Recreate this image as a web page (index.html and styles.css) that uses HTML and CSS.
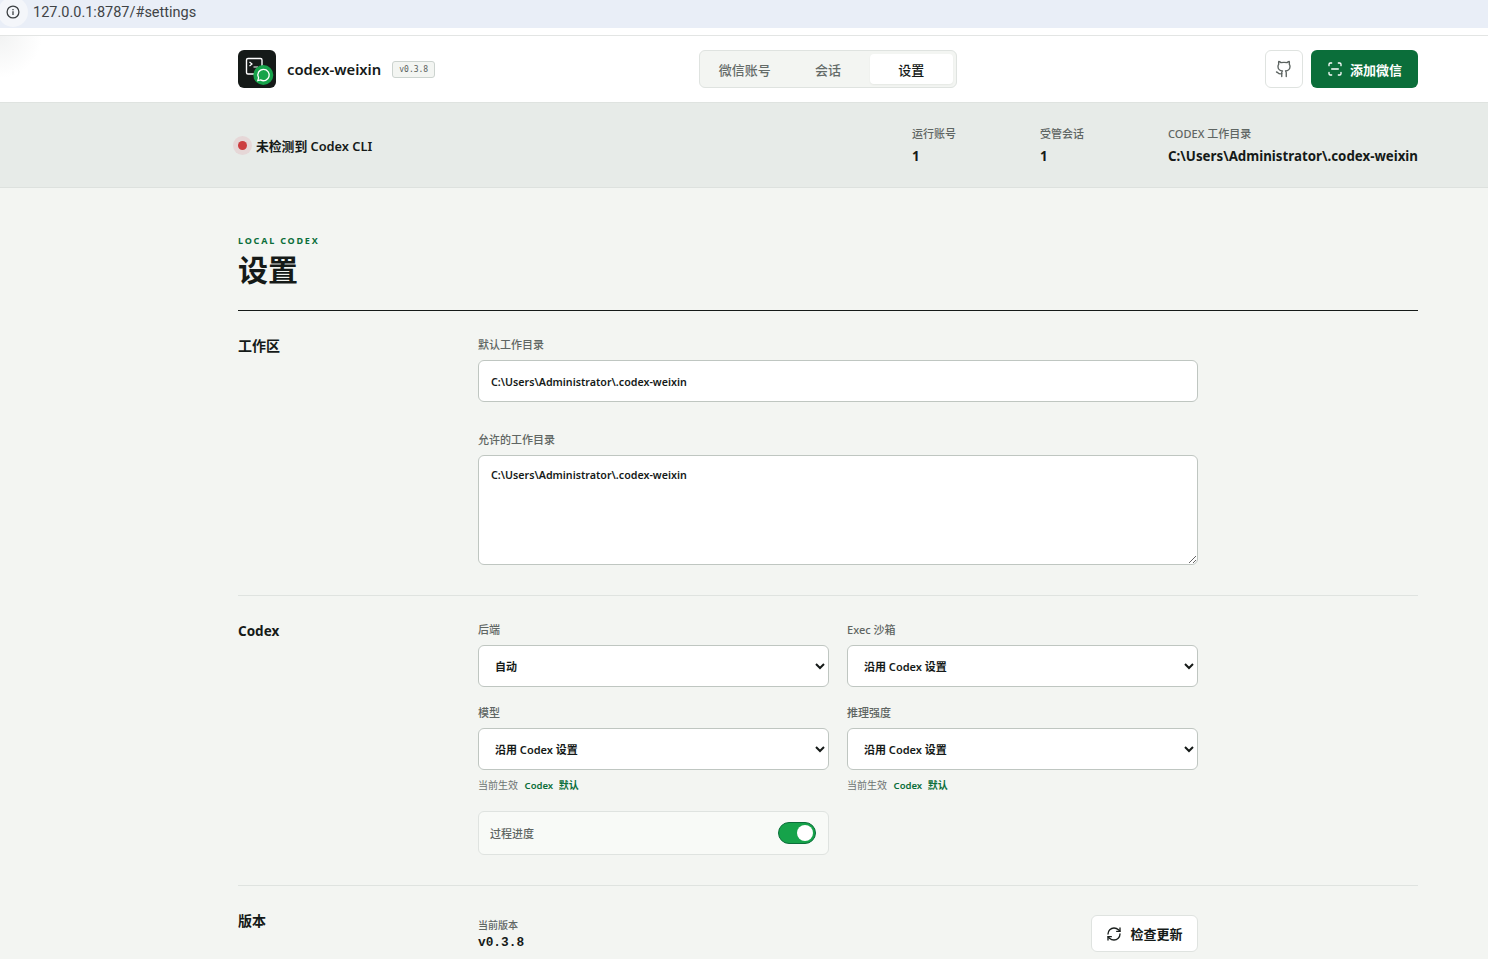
FILE: index.html
```html
<!DOCTYPE html>
<html lang="en">

<head>
  <meta name="viewport" content="width=device-width, initial-scale=1.0" />
  <title>codex-weixin</title>
  <link rel="stylesheet" href="styles.css">
</head>

<body>
  <div class="urlbar">
    <span class="url-icon">
      <svg width="14" height="14" viewBox="0 0 14 14" fill="none" stroke="#3c4043" stroke-width="1.3">
        <circle cx="7" cy="7" r="5.9" />
        <path d="M7 6.2v3.8" />
        <path d="M7 4v1.3" />
      </svg>
    </span>
    <span class="url-text">127.0.0.1:8787/#settings</span>
  </div>

  <header class="topbar">
    <div class="wrap topbar-inner">
      <div class="brand">
        <span class="logo">
          <svg width="38" height="38" viewBox="0 0 38 38" fill="none">
            <rect x="8.5" y="8.5" width="15.5" height="15.5" rx="1.5" stroke="#fff" stroke-width="1.4" />
            <path d="M11.5 12l2.5 2-2.5 2" stroke="#fff" stroke-width="1.2" />
            <path d="M15.5 17h4.5" stroke="#fff" stroke-width="1.2" />
            <circle cx="25.3" cy="25" r="10" fill="#16a34a" />
            <path d="M25.5 19.3a5.7 5.7 0 1 1-2.9 10.6l-2.8.7.8-2.7a5.7 5.7 0 0 1 4.9-8.6z" stroke="#fff" stroke-width="1.3" />
          </svg>
        </span>
        <span class="brand-name">codex-weixin</span>
        <span class="version-tag">v0.3.8</span>
      </div>

      <nav class="tabs">
        <a class="tab">微信账号</a>
        <a class="tab">会话</a>
        <a class="tab active">设置</a>
      </nav>

      <div class="top-actions">
        <button class="icon-btn" type="button">
          <svg width="18" height="18" viewBox="0 0 24 24" fill="none" stroke="#5b625f" stroke-width="1.8" stroke-linecap="round" stroke-linejoin="round">
            <path d="M15 22v-4a4.8 4.8 0 0 0-1-3.5c3 0 6-2 6-5.5.08-1.25-.27-2.48-1-3.5.28-1.15.28-2.35 0-3.5 0 0-1 0-3 1.5-2.64-.5-5.36-.5-8 0C6 2 5 2 5 2c-.3 1.15-.3 2.35 0 3.5A5.403 5.403 0 0 0 4 9c0 3.5 3 5.5 6 5.5-.39.49-.68 1.05-.85 1.65-.17.6-.22 1.23-.15 1.85v4" />
            <path d="M9 18c-4.51 2-5-2-7-2" />
          </svg>
        </button>
        <button class="add-btn" type="button">
          <svg width="16" height="16" viewBox="0 0 24 24" fill="none" stroke="#fff" stroke-width="2" stroke-linecap="round" stroke-linejoin="round">
            <path d="M3 7V5a2 2 0 0 1 2-2h2" />
            <path d="M17 3h2a2 2 0 0 1 2 2v2" />
            <path d="M21 17v2a2 2 0 0 1-2 2h-2" />
            <path d="M7 21H5a2 2 0 0 1-2-2v-2" />
            <path d="M7 12h10" />
          </svg>
          添加微信
        </button>
      </div>
    </div>
  </header>

  <section class="status">
    <div class="wrap status-inner">
      <div class="status-state">
        <span class="dot"></span>
        <span>未检测到 Codex CLI</span>
      </div>
      <div class="stats">
        <div class="stat stat-short">
          <span class="stat-label">运行账号</span>
          <strong>1</strong>
        </div>
        <div class="stat stat-short">
          <span class="stat-label">受管会话</span>
          <strong>1</strong>
        </div>
        <div class="stat">
          <span class="stat-label">CODEX 工作目录</span>
          <strong>C:\Users\Administrator\.codex-weixin</strong>
        </div>
      </div>
    </div>
  </section>

  <main class="wrap">
    <div class="page-head">
      <p class="eyebrow">LOCAL CODEX</p>
      <h1>设置</h1>
    </div>

    <section class="group">
      <h2>工作区</h2>
      <div class="form">
        <label class="field">
          <span class="field-label">默认工作目录</span>
          <input type="text" value="C:\Users\Administrator\.codex-weixin" />
        </label>
        <label class="field field-gap">
          <span class="field-label">允许的工作目录</span>
          <textarea>C:\Users\Administrator\.codex-weixin</textarea>
        </label>
      </div>
    </section>

    <section class="group">
      <h2 class="latin">Codex</h2>
      <div class="form">
        <div class="two-col">
          <label class="field">
            <span class="field-label">后端</span>
            <select><option>自动</option></select>
          </label>
          <label class="field">
            <span class="field-label">Exec 沙箱</span>
            <select><option>沿用 Codex 设置</option></select>
          </label>
          <div class="field">
            <span class="field-label">模型</span>
            <select><option>沿用 Codex 设置</option></select>
            <p class="hint">当前生效 <code>Codex</code> <b>默认</b></p>
          </div>
          <div class="field">
            <span class="field-label">推理强度</span>
            <select><option>沿用 Codex 设置</option></select>
            <p class="hint">当前生效 <code>Codex</code> <b>默认</b></p>
          </div>
          <div class="toggle-card">
            <span>过程进度</span>
            <span class="switch"></span>
          </div>
        </div>
      </div>
    </section>

    <section class="group group-last">
      <h2>版本</h2>
      <div class="form version-row">
        <div class="version-info">
          <span class="version-label">当前版本</span>
          <span class="version-num">v0.3.8</span>
        </div>
        <button class="update-btn" type="button">
          <svg width="16" height="16" viewBox="0 0 24 24" fill="none" stroke="#1a1f1d" stroke-width="2" stroke-linecap="round" stroke-linejoin="round">
            <path d="M3 12a9 9 0 0 1 9-9 9.75 9.75 0 0 1 6.74 2.74L21 8" />
            <path d="M21 3v5h-5" />
            <path d="M21 12a9 9 0 0 1-9 9 9.75 9.75 0 0 1-6.74-2.74L3 16" />
            <path d="M8 16H3v5" />
          </svg>
          检查更新
        </button>
      </div>
    </section>
  </main>
</body>

</html>
```

FILE: styles.css
```css
* {
  padding: 0;
  margin: 0;
  box-sizing: border-box;
}

html {
  height: 959px;
  overflow: hidden;
}

body {
  background-color: #f3f5f2;
  color: #151a18;
  font-family: "Noto Sans", "Noto Sans CJK SC", sans-serif;
  font-size: 14px;
}

button,
input,
select,
textarea {
  font-family: inherit;
}

.wrap {
  width: 1180px;
  margin-left: 238px;
}

/* browser address bar */
.urlbar {
  height: 36px;
  padding-bottom: 11px;
  display: flex;
  align-items: center;
  background: linear-gradient(#e9eef7 28px, #ffffff 28px);
  border-bottom: 1px solid #e3e5e4;
  background-origin: border-box;
  overflow: hidden;
}

.url-icon {
  width: 30px;
  height: 30px;
  margin-left: -2px;
  border-radius: 50%;
  background-color: #f4f6fa;
  display: flex;
  align-items: center;
  justify-content: center;
  flex: none;
}

.url-text {
  margin-left: 5px;
  font-family: "Roboto", sans-serif;
  font-size: 14.5px;
  color: #3f4346;
}

/* header */
.topbar {
  height: 67px;
  background: radial-gradient(circle at 0 0, #f2f3f3, #ffffff 42px);
  border-bottom: 1px solid #dfe3e0;
}

.topbar-inner {
  height: 66px;
  display: grid;
  grid-template-columns: 1fr auto 1fr;
  align-items: center;
}

.brand {
  display: flex;
  align-items: center;
}

.logo {
  width: 38px;
  height: 38px;
  border-radius: 6px;
  background-color: #151a18;
  overflow: hidden;
  display: block;
}

.brand-name {
  margin-left: 11px;
  font-size: 14.8px;
  font-weight: 600;
}

.version-tag {
  margin-left: 11px;
  padding: 0 6px;
  height: 17px;
  line-height: 15px;
  border: 1px solid #ccd3cf;
  border-radius: 3px;
  background-color: #f3f5f2;
  color: #59615d;
  font-family: "DejaVu Sans Mono", monospace;
  font-size: 8px;
}

.tabs {
  width: 258px;
  height: 38px;
  padding: 3px;
  display: flex;
  background-color: #f3f5f2;
  border: 1px solid #dfe3e0;
  border-radius: 6px;
}

.tab {
  flex: 1;
  display: flex;
  align-items: center;
  justify-content: center;
  font-size: 13px;
  font-weight: 500;
  color: #646b68;
  border-radius: 4px;
}

.tab.active {
  background-color: #fff;
  color: #151a18;
  box-shadow: 0 1px 2px rgba(21, 26, 24, 0.06);
}

.top-actions {
  display: flex;
  justify-content: flex-end;
  gap: 8px;
}

.icon-btn {
  width: 38px;
  height: 38px;
  display: flex;
  align-items: center;
  justify-content: center;
  background-color: #fff;
  border: 1px solid #dfe3e0;
  border-radius: 6px;
}

.add-btn {
  width: 107px;
  height: 38px;
  display: flex;
  align-items: center;
  justify-content: center;
  gap: 7px;
  background-color: #0b6e3a;
  color: #fff;
  border: 0;
  border-radius: 6px;
  font-size: 13px;
  font-weight: 700;
}

/* status strip */
.status {
  height: 85px;
  background-color: #e7ebe8;
  border-bottom: 1px solid #dde1de;
}

.status-inner {
  height: 84px;
  display: flex;
  align-items: center;
  justify-content: space-between;
}

.status-state {
  display: flex;
  align-items: center;
  gap: 4px;
  margin-left: -5px;
  font-size: 12.8px;
  font-weight: 600;
}

.dot {
  width: 19px;
  height: 19px;
  border-radius: 50%;
  background-color: #e6d7d7;
  display: flex;
  align-items: center;
  justify-content: center;
}

.dot::after {
  content: "";
  width: 9px;
  height: 9px;
  border-radius: 50%;
  background-color: #cc3d3f;
}

.stats {
  display: flex;
}

.stat {
  display: flex;
  flex-direction: column;
  gap: 4px;
}

.stat-short {
  width: 128px;
}

.stat-label {
  font-size: 11px;
  font-weight: 500;
  color: #5f6663;
  line-height: 18px;
}

.stat strong {
  font-size: 13.3px;
  font-weight: 700;
  line-height: 18px;
}

/* page */
.page-head {
  padding-top: 47px;
  height: 123px;
  border-bottom: 1px solid #151a18;
}

.eyebrow {
  font-size: 9px;
  font-weight: 700;
  letter-spacing: 1.8px;
  color: #0b6e3a;
  line-height: 12px;
}

h1 {
  font-size: 30px;
  font-weight: 700;
  line-height: 38px;
  margin-top: 4px;
}

.group {
  display: grid;
  grid-template-columns: 240px 720px;
  padding: 26px 0 30px;
  border-bottom: 1px solid #dfe3e0;
}

.group-last {
  border-bottom: 0;
}

h2 {
  font-size: 14px;
  font-weight: 700;
  line-height: 20px;
  margin-top: -1px;
}

h2.latin {
  font-size: 13.5px;
}

.field {
  display: flex;
  flex-direction: column;
}

.field-gap {
  margin-top: 30px;
}

.field-label {
  font-size: 11px;
  font-weight: 500;
  color: #5f6663;
  line-height: 16px;
  margin-bottom: 7px;
}

input,
textarea,
select {
  width: 100%;
  background-color: #fff;
  border: 1px solid #bfc6c1;
  border-radius: 6px;
  color: #151a18;
  font-size: 11px;
  font-weight: 600;
}

input {
  height: 42px;
  padding: 1px 12px 0;
  font-size: 10.7px;
}

textarea {
  height: 110px;
  padding: 11px 12px;
  line-height: 16px;
  display: block;
  font-size: 10.7px;
}

select {
  height: 42px;
  padding: 1px 12px 0;
}

.two-col {
  display: grid;
  grid-template-columns: 351px 351px;
  column-gap: 18px;
  row-gap: 18px;
}

.hint {
  margin-top: 8px;
  font-size: 10px;
  line-height: 15px;
  color: #6d7471;
}

.hint code {
  font-family: inherit;
  font-size: 9.5px;
  font-weight: 600;
  color: #0b6e3a;
  margin: 0 3px 0 4px;
}

.hint b {
  color: #0b6e3a;
}

.toggle-card {
  height: 44px;
  padding: 0 12px 0 11px;
  display: flex;
  align-items: center;
  justify-content: space-between;
  background-color: #f8faf7;
  border: 1px solid #dfe3e0;
  border-radius: 6px;
  font-size: 11px;
  font-weight: 500;
  color: #5f6663;
}

.switch {
  width: 38px;
  height: 22px;
  border-radius: 11px;
  background-color: #16a34a;
  border: 1px solid #0b6e3a;
  display: flex;
  align-items: center;
  justify-content: flex-end;
  padding-right: 2px;
}

.switch::after {
  content: "";
  width: 16px;
  height: 16px;
  border-radius: 50%;
  background-color: #fff;
}

.version-row {
  display: flex;
  justify-content: space-between;
  align-items: flex-start;
  padding-top: 3px;
}

.version-info {
  display: flex;
  flex-direction: column;
  padding-top: 2px;
}

.version-label {
  font-size: 10px;
  font-weight: 500;
  color: #5f6663;
  line-height: 16px;
}

.version-num {
  font-family: "Liberation Mono", monospace;
  font-size: 12.8px;
  font-weight: 700;
  line-height: 20px;
}

.update-btn {
  width: 107px;
  height: 37px;
  display: flex;
  align-items: center;
  justify-content: center;
  gap: 8px;
  background-color: #fff;
  border: 1px solid #dfe3e0;
  border-radius: 6px;
  font-size: 13px;
  font-weight: 600;
  color: #151a18;
}
```
